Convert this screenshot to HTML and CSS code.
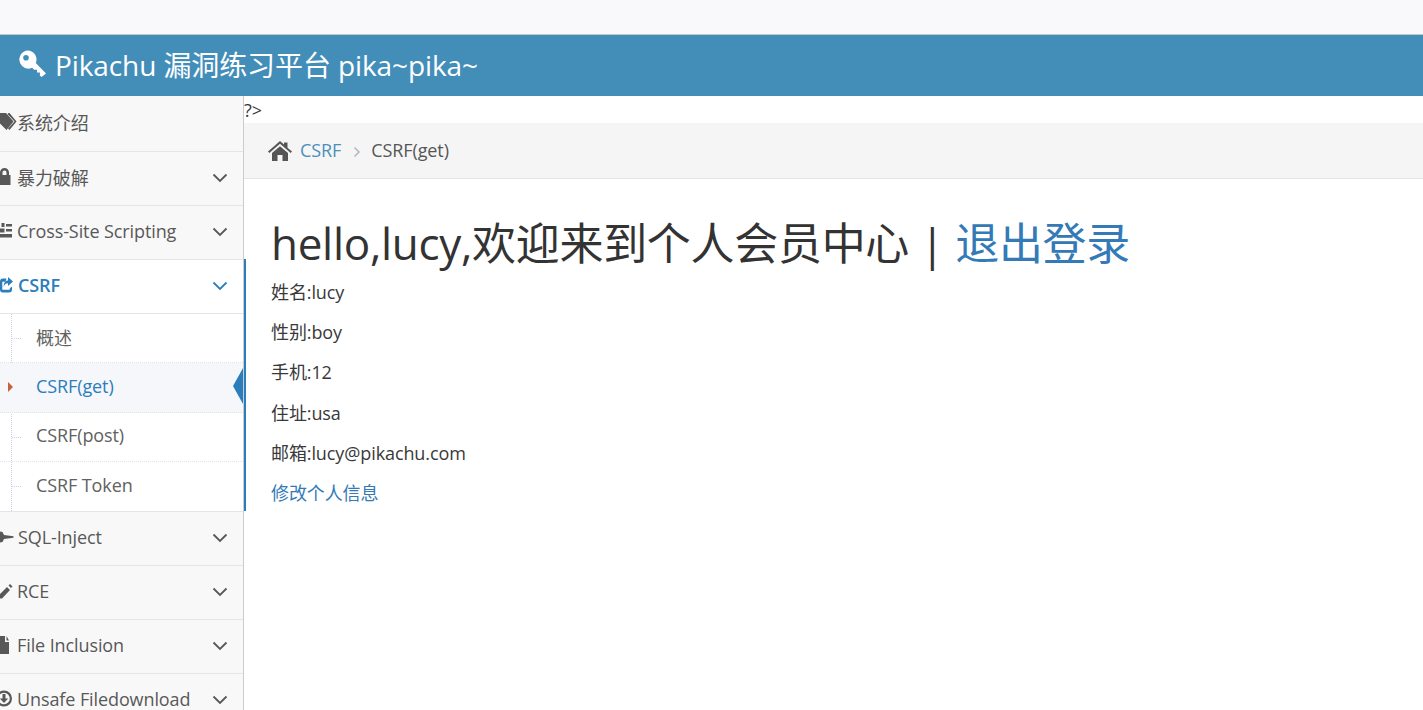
FILE: index.html
```html
<!DOCTYPE html>
<html lang="zh-CN">
<head>
    <meta charset="UTF-8">
    <title>Pikachu 漏洞练习平台</title>
    <link rel="stylesheet" href="styles.css">
</head>
<body>
    <div class="top-strip"></div>
    <header class="navbar">
        <svg class="brand-icon" viewBox="0 0 28 28"><path d="M9.500 0.500a9 9 0 0 0-6.400 15.400 9 9 0 0 0 10 1.800l2 2h2.900v2.900h2.900v2.900l1.600 1.400 4.500-3.500-10.200-10.400A9 9 0 0 0 9.500 0.500zM7 5a2.800 2.800 0 1 1 0 5.600A2.800 2.800 0 0 1 7 5z" fill-rule="evenodd"/></svg>
        <span class="brand">Pikachu 漏洞练习平台 pika~pika~</span>
    </header>
    <div class="layout">
        <nav class="sidebar">
            <ul class="menu">
                <li class="menu-item first">
                    <svg class="icon" viewBox="0 0 18 18"><path d="M0 0h7l7.500 8.500L7.500 17 0 9.500zM9.500 0h1l7 8.500-7 8.500-1.500-1.500L15.500 8.500 8.500 1z"/></svg>
                    <span class="tight">系统介绍</span>
                </li>
                <li class="menu-item">
                    <svg class="icon" viewBox="0 0 18 18"><path d="M1 7V4.500a4.500 4.500 0 0 1 9 0V7h1.500v10H0V7zm2.500 0h4V4.500a2 2 0 0 0-4 0z" fill-rule="evenodd"/></svg>
                    <span>暴力破解</span>
                    <svg class="chevron" viewBox="0 0 16 10"><path d="M1.500 1.500 8 8l6.500-6.500"/></svg>
                </li>
                <li class="menu-item">
                    <svg class="icon" viewBox="0 0 18 18"><path d="M2.500 1h3v4h-3zM1 6.500h4.500v4H1zM0 12h13v3.500H0zM7 2h6v2.500H7zM7 7h6v2.500H7z"/></svg>
                    <span>Cross-Site Scripting</span>
                    <svg class="chevron" viewBox="0 0 16 10"><path d="M1.500 1.500 8 8l6.500-6.500"/></svg>
                </li>
                <li class="menu-item open">
                    <svg class="icon wide" viewBox="0 0 18 18"><path d="M7 2.500H3.500A3 3 0 0 0 .5 5.500v8a3 3 0 0 0 3 3h6a3 3 0 0 0 3-3v-3l-2.200 1.700v1.500H2.800v-8H6z"/><path d="M8.500 1l5 4.500-5 4.500V7.300C6 7.300 4.800 8.500 4.300 11c-.3-4 1.500-6.500 4.200-6.500z"/></svg>
                    <span>CSRF</span>
                    <svg class="chevron" viewBox="0 0 16 10"><path d="M1.500 1.500 8 8l6.500-6.500"/></svg>
                </li>
                <li class="submenu-wrap">
                    <ul class="submenu">
                        <li class="sub-item">概述</li>
                        <li class="sub-item active">CSRF(get)</li>
                        <li class="sub-item">CSRF(post)</li>
                        <li class="sub-item">CSRF Token</li>
                    </ul>
                </li>
                <li class="menu-item">
                    <svg class="icon wide" viewBox="0 0 18 18"><path d="M0 3.500l3 .5 1.500 3 9.500 1.200v1.600L4.500 11 3 14l-3 .5z"/></svg>
                    <span>SQL-Inject</span>
                    <svg class="chevron" viewBox="0 0 16 10"><path d="M1.500 1.500 8 8l6.500-6.500"/></svg>
                </li>
                <li class="menu-item">
                    <svg class="icon" viewBox="0 0 18 18"><path d="M0 13l8-8 3 3-8 8.500H0zM9.500 3.500 11 2l2.500 2.500L12 6z"/></svg>
                    <span>RCE</span>
                    <svg class="chevron" viewBox="0 0 16 10"><path d="M1.500 1.500 8 8l6.500-6.500"/></svg>
                </li>
                <li class="menu-item">
                    <svg class="icon" viewBox="0 0 18 18"><path d="M0 0h6v6h4v12H0zM7.500 0 10 4.500H7.500z"/></svg>
                    <span>File Inclusion</span>
                    <svg class="chevron" viewBox="0 0 16 10"><path d="M1.500 1.500 8 8l6.500-6.500"/></svg>
                </li>
                <li class="menu-item">
                    <svg class="icon" viewBox="0 0 18 18"><path d="M5 .5a8 8 0 1 0 0 16 8 8 0 0 0 0-16zm0 2.200a5.800 5.800 0 1 1 0 11.600A5.800 5.800 0 0 1 5 2.700zM3.500 4h3v4.500h2.700L5 13 .8 8.500h2.700z" fill-rule="evenodd"/></svg>
                    <span>Unsafe Filedownload</span>
                    <svg class="chevron" viewBox="0 0 16 10"><path d="M1.500 1.500 8 8l6.500-6.500"/></svg>
                </li>
            </ul>
        </nav>
        <main class="content">
            <div class="stray">?&gt;</div>
            <div class="breadcrumbs">
                <svg class="home" viewBox="0 0 24 20"><path d="M12 0l4 3.600V1.500h3.500v5.200L24 10.500l-1.300 1.400L12 2.700 1.300 11.900 0 10.500zM4 12l8-6.800 8 6.800v8h-5.500v-6h-5v6H4z"/></svg>
                <a class="crumb-link">CSRF</a>
                <svg class="crumb-sep" viewBox="0 0 8 12"><path d="M1.500 1.500 6 6l-4.500 4.500"/></svg>
                <span>CSRF(get)</span>
            </div>
            <div class="page-body">
                <h1 class="welcome">hello,lucy,欢迎来到个人会员中心 | <a>退出登录</a></h1>
                <p class="info first-line">姓名:lucy</p>
                <p class="info">性别:boy</p>
                <p class="info">手机:12</p>
                <p class="info">住址:usa</p>
                <p class="info">邮箱:lucy@pikachu.com</p>
                <a class="edit-link">修改个人信息</a>
            </div>
        </main>
    </div>
</body>
</html>
```

FILE: styles.css
```css
*{
    margin: 0;
    padding: 0;
    box-sizing: border-box;
}
html, body{
    height: 710px;
    overflow: hidden;
}
body{
    font-family: "Open Sans", "Noto Sans CJK SC", sans-serif;
    font-size: 18px;
    letter-spacing: -0.1px;
    color: #393939;
    background-color: #fff;
}
ul{
    list-style: none;
}
a{
    color: #337ab7;
}
.top-strip{
    height: 35px;
    background-color: #f9f9fb;
    border-bottom: 1px solid #c4c6c8;
}
.navbar{
    display: flex;
    align-items: center;
    height: 61px;
    padding-left: 19px;
    padding-bottom: 3px;
    background-color: #438eb9;
    color: #fff;
}
.brand-icon{
    width: 28px;
    height: 28px;
    margin-right: 8px;
    fill: #fff;
}
.brand{
    font-size: 28px;
}
.layout{
    display: flex;
    height: 614px;
}
.sidebar{
    flex: 0 0 244px;
    background-color: #f8f8f8;
    border-right: 1px solid #ccc;
}
.menu-item{
    display: flex;
    align-items: center;
    height: 54px;
    padding-right: 15px;
    padding-bottom: 3px;
    margin-left: -1px;
    color: #585858;
    border-bottom: 1px solid #e5e5e5;
}
.menu-item.first{
    height: 56px;
}
.menu-item span{
    flex: 1;
}
.icon{
    flex: 0 0 18px;
    width: 18px;
    height: 18px;
    fill: #585858;
}
.icon.wide{
    flex-basis: 19px;
}
.chevron{
    width: 16px;
    height: 10px;
    margin-top: 1px;
    fill: none;
    stroke: #585858;
    stroke-width: 1.800;
}
.menu-item.open{
    background-color: #fff;
    color: #2b7dbc;
    font-weight: 600;
}
.menu-item.open .icon{
    fill: #2b7dbc;
}
.menu-item.open .chevron{
    stroke: #2b7dbc;
}
.submenu-wrap{
    background-color: #fff;
    border-bottom: 1px solid #e5e5e5;
    position: relative;
}
.submenu{
    border-left: 1px dotted #c5d3e2;
    margin-left: 11px;
}
.sub-item{
    position: relative;
    display: flex;
    align-items: center;
    height: 49.25px;
    margin-left: -12px;
    padding-left: 36px;
    padding-bottom: 3px;
    color: #616161;
    border-bottom: 1px dotted #e4e4e4;
}
.sub-item:last-child{
    border-bottom: none;
}
.sub-item::before{
    content: "";
    position: absolute;
    left: 12px;
    top: 24px;
    width: 9px;
    border-top: 1px dotted #c5d3e2;
}
.sub-item.active{
    color: #2b7dbc;
    background-color: #f5f7fa;
}
.sub-item.active::before{
    left: 8px;
    top: 19px;
    width: 0;
    border-top: 5px solid transparent;
    border-bottom: 5px solid transparent;
    border-left: 5px solid #c86139;
}
.sub-item.active::after{
    content: "";
    position: absolute;
    right: 0;
    top: 5px;
    border-top: 18px solid transparent;
    border-bottom: 18px solid transparent;
    border-right: 10px solid #2b7dbc;
}
.content{
    flex: 1;
    position: relative;
    line-height: 27px;
}
.content::before{
    content: "";
    position: absolute;
    left: 0;
    top: 163px;
    height: 252px;
    border-left: 2px solid #2b7dbc;
}
.stray{
    height: 27px;
    padding-top: 1px;
}
.breadcrumbs{
    display: flex;
    align-items: center;
    height: 56px;
    padding-left: 24px;
    background-color: #f5f5f5;
    border-bottom: 1px solid #e5e5e5;
    color: #555;
}
.home{
    width: 24px;
    height: 20px;
    margin-right: 8px;
    fill: #555;
}
.crumb-link{
    color: #4c8fbd;
}
.crumb-sep{
    width: 8px;
    height: 12px;
    margin: 2px 14px 0 12px;
    fill: none;
    stroke: #b2b6bf;
    stroke-width: 1.500;
}
.crumb-sep + span{
    margin-left: -4px;
}
.page-body{
    padding: 37px 27px 0;
}
.welcome{
    font-size: 44px;
    font-weight: 400;
    letter-spacing: -0.3px;
    line-height: 54px;
    color: #333;
}
.info{
    margin-bottom: 13.2px;
}
.first-line{
    margin-top: 9px;
}
.edit-link{
    color: #337ab7;
}
```
